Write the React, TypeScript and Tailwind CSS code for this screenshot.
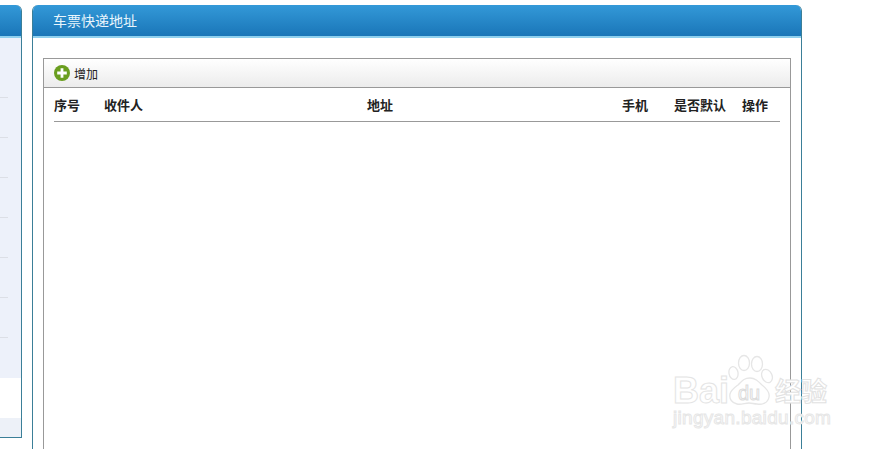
import React from 'react';

const cjk = 'font-["Liberation_Sans","Noto_Sans_CJK_SC",sans-serif]';

const SideRow = () => (
  <div className="h-10 shrink-0 flex items-end">
    <div className="w-[8px] h-px bg-[#dcdfe6]" />
  </div>
);

const Watermark = () => (
  <div className="absolute left-[672px] top-[352px] w-[162px] h-[80px] pointer-events-none">
    <span className="absolute left-[1px] top-[17px] text-[36px] leading-[44px] font-bold text-white [-webkit-text-stroke:1px_#e4e4e4] font-['Liberation_Sans',sans-serif]">Bai</span>
    <svg className="absolute left-[56px] top-[2px]" width="46" height="54" viewBox="0 0 46 54" fill="#fff" stroke="#e6e6e6" strokeWidth="1.3">
      <ellipse cx="5.5" cy="19" rx="4.5" ry="6.5" transform="rotate(-10 5.5 19)" />
      <ellipse cx="16" cy="9" rx="5.5" ry="7.5" />
      <ellipse cx="29" cy="10" rx="5.5" ry="7.5" />
      <ellipse cx="39" cy="22" rx="5" ry="7" transform="rotate(-25 39 22)" />
      <path d="M22 24c5 0 8 3 12 7 5 4 8 8 7 12-1 6-7 8-12 7-3 0-5-1-8-1-4 0-8 2-12 1-5-1-8-5-7-10 1-4 4-6 8-9 4-4 6-7 12-7z" />
    </svg>
    <span className="absolute left-[66px] top-[30px] text-[20px] leading-[22px] text-white [-webkit-text-stroke:1px_#dcdcdc] font-['Liberation_Sans',sans-serif]">du</span>
    <span className="absolute left-[103px] top-[23px] whitespace-nowrap text-[26px] leading-[30px] font-bold text-white [-webkit-text-stroke:1px_#e2e2e2] font-['Noto_Sans_CJK_SC',sans-serif]">经验</span>
    <span className="absolute left-[1px] top-[54px] whitespace-nowrap text-[19px] leading-[24px] tracking-[0.3px] text-white [-webkit-text-stroke:1px_#e6e6e6] font-['Liberation_Sans',sans-serif]">jingyan.baidu.com</span>
  </div>
);

export default function App() {
  return (
    <div className={`relative h-[449px] w-[878px] overflow-hidden bg-white ${cjk}`}>
      <div className="flex items-start gap-[10px] pt-[5px]">
        {/* left menu, cut off by the window */}
        <div className="w-[22px] h-[433px] flex flex-col border-r border-b border-[#3b7f98] rounded-tr-md overflow-hidden bg-[#edf1fa]">
          <div className="h-[33px] shrink-0 bg-gradient-to-b from-[#3399d8] to-[#1a76b8] border-b-2 border-[#8fd0ee]" />
          <div className="flex flex-col pt-[20px]">
            <SideRow />
            <SideRow />
            <SideRow />
            <SideRow />
            <SideRow />
            <SideRow />
            <SideRow />
            <div className="h-10 shrink-0" />
          </div>
          <div className="h-10 shrink-0 bg-white" />
          <div className="flex-1 bg-[#edf1f8]" />
        </div>

        {/* main panel */}
        <div className="w-[770px] h-[460px] border-x border-[#3b7f98] rounded-t-md overflow-hidden bg-white">
          <div className="h-[33px] flex items-center pl-5 pt-[2px] bg-gradient-to-b from-[#3399d8] to-[#1a76b8] border-b-2 border-[#8fd0ee] text-[14px] text-[#e8f5fc]">
            车票快递地址
          </div>
          <div className="mt-5 mx-[10px] h-[420px] border border-[#999]">
            <div className="h-[29px] flex items-center gap-1 pl-[10px] border-b border-[#999] bg-gradient-to-b from-white to-[#ececec] text-[12px] text-[#222]">
              <svg width="16" height="16" viewBox="0 0 16 16">
                <circle cx="8" cy="8" r="8" fill="#6a9e1f" />
                <path d="M8 3.2v9.6M3.2 8h9.6" stroke="#fff" strokeWidth="2.8" />
              </svg>
              <span className="pt-[3px]">增加</span>
            </div>
            <div className="mx-[10px] h-[34px] pt-[3px] flex items-center border-b border-[#999] text-[13px] font-bold text-[#222]">
              <span className="w-[50px]">序号</span>
              <span className="w-[263px]">收件人</span>
              <span className="w-[255px]">地址</span>
              <span className="w-[52px]">手机</span>
              <span className="w-[68px]">是否默认</span>
              <span>操作</span>
            </div>
          </div>
        </div>
      </div>
      <Watermark />
    </div>
  );
}
